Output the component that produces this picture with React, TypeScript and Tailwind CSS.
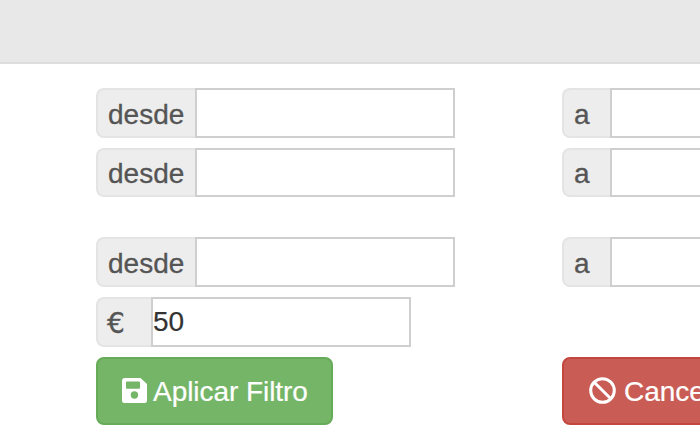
import type { ReactNode } from 'react';

function Addon({ className, children }: { className: string; children: ReactNode }) {
  return (
    <span
      className={`flex shrink-0 items-center rounded-l-[8px] border-2 border-r-0 border-[#e4e4e4] bg-[#ededed] text-[#555555] [-webkit-text-stroke:0.3px_#555555] ${className}`}
    >
      {children}
    </span>
  );
}

function Field({ label, addon, height, value = '' }: { label: string; addon: string; height: string; value?: string }) {
  return (
    <label className={`flex ${height}`}>
      <Addon className={addon}>{label}</Addon>
      <input
        defaultValue={value}
        className="w-[260px] shrink-0 border-2 border-[#cfcfcf] bg-white p-0 text-[28px] text-[#333333] outline-none [-webkit-text-stroke:0.2px_#333333]"
      />
    </label>
  );
}

function RangeRow({ height = 'h-[50px]' }: { height?: string }) {
  return (
    <div className="flex">
      <div className="w-[466px] shrink-0">
        <Field label="desde" addon="w-[99px] pl-[10px] pt-[3px]" height={height} />
      </div>
      <Field label="a" addon="w-[48px] pl-[10px] pt-[3px]" height={height} />
    </div>
  );
}

function SaveIcon() {
  return (
    <svg className="mb-px mr-[6px] h-[25px] w-[25px] shrink-0" viewBox="0 0 25 25">
      <path
        fill="#fff"
        fillRule="evenodd"
        d="M3 0H18.5L25 6V22.5Q25 25 22.5 25H2.5Q0 25 0 22.5V3Q0 0 3 0ZM4 4.4V10Q4 10.8 4.8 10.8H17.2Q18 10.8 18 10V4.4Q18 3.6 17.2 3.6H4.8Q4 3.6 4 4.4ZM12.4 13.3A3.7 3.7 0 1 0 12.4 20.7A3.7 3.7 0 1 0 12.4 13.3Z"
      />
    </svg>
  );
}

function BanIcon() {
  return (
    <svg className="mb-px mr-[8px] h-[27px] w-[27px] shrink-0" viewBox="0 0 27 27" fill="none" stroke="#fff" strokeWidth="3">
      <circle cx="13.5" cy="13.5" r="11.8" />
      <path d="M5.2 5.2L21.8 21.8" />
    </svg>
  );
}

export default function App() {
  return (
    <div className="h-[441px] w-[700px] overflow-hidden bg-white font-['Liberation_Sans',Arial,sans-serif] text-[28px] leading-[40px]">
      <header className="h-[64px] border-b-2 border-[#dddddd] bg-[#e8e8e8]" />
      <main className="w-[1100px] pl-24 pt-6">
        <RangeRow />
        <div className="mt-[10px]">
          <RangeRow height="h-[49px]" />
        </div>
        <div className="mt-[40px]">
          <RangeRow />
        </div>
        <div className="mt-[10px]">
          <Field
            label="€"
            addon="w-[55px] pl-[9px] pt-[3px] font-['DejaVu_Sans',sans-serif]"
            height="h-[50px]"
            value="50"
          />
        </div>
        <div className="mt-[10px] flex">
          <div className="w-[466px] shrink-0">
            <button className="flex h-[68px] w-[237px] items-center whitespace-nowrap rounded-[8px] border-2 border-[#66ab58] bg-[#75b567] pl-6 text-white">
              <SaveIcon />
              <span className="pt-0.5 tracking-[-0.05px] [-webkit-text-stroke:0.2px_#ffffff]">Aplicar Filtro</span>
            </button>
          </div>
          <button className="flex h-[68px] w-[180px] items-center whitespace-nowrap rounded-[8px] border-2 border-[#c3473f] bg-[#c95c54] pl-[25px] text-white">
            <BanIcon />
            <span className="pt-0.5 [-webkit-text-stroke:0.2px_#ffffff]">Cancelar</span>
          </button>
        </div>
      </main>
    </div>
  );
}
